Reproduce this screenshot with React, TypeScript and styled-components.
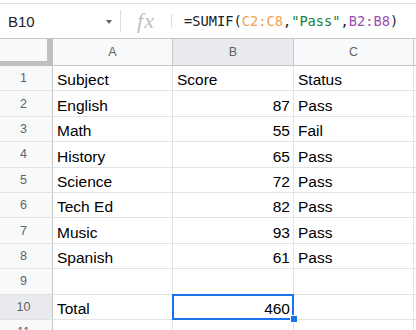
import React from "react";
import styled, { createGlobalStyle, css } from "styled-components";

const GlobalStyle = createGlobalStyle`
  html, body {
    margin: 0;
    padding: 0;
    background: #ffffff;
  }
  body {
    font-family: "Liberation Sans", Arial, sans-serif;
  }
`;

const Page = styled.div`
  width: 416px;
  height: 330px;
  overflow: hidden;
  display: flex;
  flex-direction: column;
  background: #fff;
`;

const TopStrip = styled.div`
  height: 3px;
  border-bottom: 1px solid #e0e0e0;
  flex-shrink: 0;
`;

const FormulaBar = styled.div`
  height: 34px;
  flex-shrink: 0;
  display: flex;
  align-items: center;
  border-bottom: 1px solid #c4c7c5;
`;

const NameBox = styled.div`
  width: 120px;
  height: 100%;
  box-sizing: border-box;
  display: flex;
  align-items: center;
  justify-content: space-between;
  padding: 0 8px 0 8px;
  font-size: 15px;
  color: #202124;
`;

const Caret = styled.span`
  width: 0;
  height: 0;
  border-left: 3.5px solid transparent;
  border-right: 3.5px solid transparent;
  border-top: 4px solid #5f6368;
  margin-top: 2px;
`;

const Divider = styled.div<{ $h: number }>`
  width: 1px;
  height: ${(p) => p.$h}px;
  background: #dadce0;
  flex-shrink: 0;
`;

const FxLabel = styled.div`
  width: 50px;
  text-align: center;
  font-family: "Liberation Serif", "Times New Roman", serif;
  font-style: italic;
  font-size: 22px;
  color: #bdc1c6;
  letter-spacing: 1px;
  line-height: 1;
`;

const FormulaText = styled.div`
  padding-left: 12px;
  font-family: "DejaVu Sans Mono", "Liberation Mono", monospace;
  font-size: 13.7px;
  color: #202124;
  white-space: nowrap;
`;

const Token = styled.span<{ $kind: "range1" | "str" | "range2" }>`
  color: ${(p) =>
    p.$kind === "range1" ? "#f4a14e" : p.$kind === "str" ? "#188038" : "#9b51b0"};
`;

const Grid = styled.div`
  display: grid;
  grid-template-columns: 53px 120px 121px 120px 1fr;
  grid-auto-rows: 25.4px;
  grid-template-rows: 27px;
`;

const Corner = styled.div`
  background: #f8f9fa;
  border-right: 6px solid #c0c0c0;
  border-bottom: 5px solid #c0c0c0;
  box-sizing: border-box;
`;

const ColHeader = styled.div<{ $selected?: boolean }>`
  box-sizing: border-box;
  background: ${(p) => (p.$selected ? "#e8eaed" : "#f8f9fa")};
  border-right: 1px solid #c4c7c5;
  border-bottom: 1px solid #c4c7c5;
  display: flex;
  align-items: center;
  justify-content: center;
  font-size: 12.5px;
  color: #5f6368;
`;

const RowHeader = styled.div<{ $selected?: boolean }>`
  box-sizing: border-box;
  background: ${(p) => (p.$selected ? "#e8eaed" : "#f8f9fa")};
  border-right: 1px solid #c4c7c5;
  border-bottom: 1px solid #e2e3e3;
  display: flex;
  align-items: center;
  justify-content: center;
  padding-right: 5px;
  font-size: 12.5px;
  color: #5f6368;
`;

const Cell = styled.div<{ $num?: boolean; $active?: boolean }>`
  position: relative;
  box-sizing: border-box;
  border-right: 1px solid #e2e3e3;
  border-bottom: 1px solid #e2e3e3;
  display: flex;
  align-items: flex-end;
  justify-content: ${(p) => (p.$num ? "flex-end" : "flex-start")};
  padding: 0 ${(p) => (p.$num ? "3px" : "4px")} 1px 4px;
  font-size: 15.5px;
  color: #000;
  white-space: nowrap;
  overflow: visible;
  ${(p) =>
    p.$active &&
    css`
      &::after {
        content: "";
        position: absolute;
        left: -1px;
        top: -1px;
        right: -1px;
        bottom: -1px;
        border: 2px solid #1a73e8;
        pointer-events: none;
      }
    `}
`;

const Handle = styled.span`
  position: absolute;
  right: -5px;
  bottom: -4px;
  width: 6px;
  height: 6px;
  background: #1a73e8;
  border: 1px solid #fff;
  z-index: 2;
`;

type Row = { a: string; b: string; c: string };

const rows: Row[] = [
  { a: "Subject", b: "Score", c: "Status" },
  { a: "English", b: "87", c: "Pass" },
  { a: "Math", b: "55", c: "Fail" },
  { a: "History", b: "65", c: "Pass" },
  { a: "Science", b: "72", c: "Pass" },
  { a: "Tech Ed", b: "82", c: "Pass" },
  { a: "Music", b: "93", c: "Pass" },
  { a: "Spanish", b: "61", c: "Pass" },
  { a: "", b: "", c: "" },
  { a: "Total", b: "460", c: "" },
  { a: "", b: "", c: "" },
];

const isNum = (s: string) => /^\d+$/.test(s);

export default function App() {
  return (
    <>
      <GlobalStyle />
      <Page>
        <TopStrip />
        <FormulaBar>
          <NameBox>
            B10
            <Caret />
          </NameBox>
          <Divider $h={22} />
          <FxLabel>fx</FxLabel>
          <Divider $h={14} />
          <FormulaText>
            =SUMIF(<Token $kind="range1">C2:C8</Token>,<Token $kind="str">"Pass"</Token>,
            <Token $kind="range2">B2:B8</Token>)
          </FormulaText>
        </FormulaBar>
        <Grid>
          <Corner />
          <ColHeader>A</ColHeader>
          <ColHeader $selected>B</ColHeader>
          <ColHeader>C</ColHeader>
          <ColHeader />
          {rows.map((r, i) => {
            const n = i + 1;
            const active = n === 10;
            return (
              <React.Fragment key={n}>
                <RowHeader $selected={active}>{n}</RowHeader>
                <Cell $num={isNum(r.a)}>{r.a}</Cell>
                <Cell $num={isNum(r.b)} $active={active}>
                  {r.b}
                  {active && <Handle />}
                </Cell>
                <Cell $num={isNum(r.c)}>{r.c}</Cell>
                <Cell />
              </React.Fragment>
            );
          })}
        </Grid>
      </Page>
    </>
  );
}
